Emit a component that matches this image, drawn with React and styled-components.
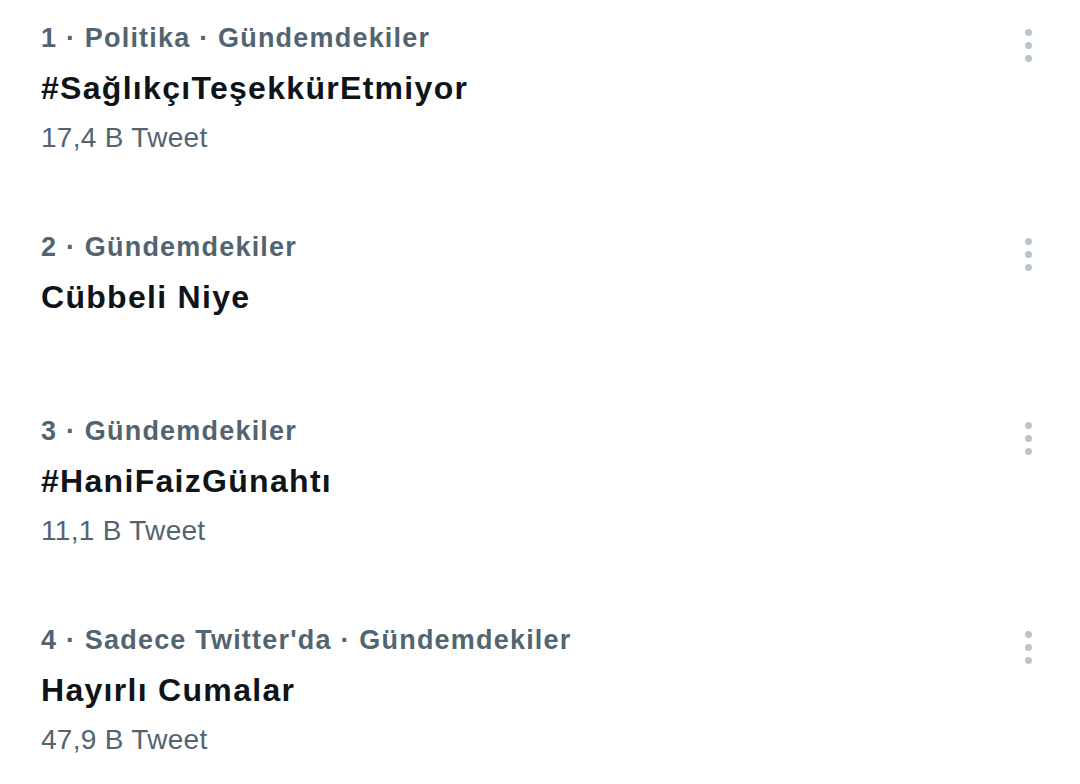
import React from 'react';
import styled, { createGlobalStyle } from "styled-components";

const Global = createGlobalStyle`
  html, body {
    margin: 0;
    padding: 0;
    background: #ffffff;
  }
  body {
    font-family: "Liberation Sans", Arial, sans-serif;
  }
`;

const List = styled.ul`
  list-style: none;
  margin: 0;
  padding: 0;
  width: 1080px;
`;

const Item = styled.li`
  position: relative;
  min-height: 184px;
  padding: 13px 0 46px 41px;
  box-sizing: border-box;
`;

const Meta = styled.div`
  font-size: 27px;
  line-height: 50px;
  font-weight: 700;
  letter-spacing: 1.2px;
  color: #536471;
`;

const Title = styled.div`
  font-size: 32px;
  line-height: 50px;
  font-weight: 700;
  letter-spacing: 1.3px;
  color: #0f1419;
`;

const Count = styled.div`
  font-size: 28px;
  line-height: 50px;
  font-weight: 400;
  letter-spacing: 0.3px;
  color: #536471;
`;

const More = styled.button`
  position: absolute;
  top: 25px;
  right: 40px;
  width: 24px;
  height: 40px;
  padding: 0;
  border: none;
  background: none;
  display: flex;
  flex-direction: column;
  align-items: center;
  justify-content: center;
  gap: 6px;

  span {
    width: 7px;
    height: 7px;
    border-radius: 50%;
    background: #b9c5cd;
  }
`;

const trends = [
    {meta: "1 · Politika · Gündemdekiler", title: "#SağlıkçıTeşekkürEtmiyor", count: "17,4 B Tweet"},
    {meta: "2 · Gündemdekiler", title: "Cübbeli Niye"},
    {meta: "3 · Gündemdekiler", title: "#HaniFaizGünahtı", count: "11,1 B Tweet"},
    {meta: "4 · Sadece Twitter'da · Gündemdekiler", title: "Hayırlı Cumalar", count: "47,9 B Tweet"},
];

function App() {
    return (
        <>
            <Global/>
            <List>
                {trends.map((t) => (
                    <Item key={t.meta}>
                        <Meta>{t.meta}</Meta>
                        <Title>{t.title}</Title>
                        {t.count && <Count>{t.count}</Count>}
                        <More aria-label="Daha fazla">
                            <span/><span/><span/>
                        </More>
                    </Item>
                ))}
            </List>
        </>
    );
}

export default App;
